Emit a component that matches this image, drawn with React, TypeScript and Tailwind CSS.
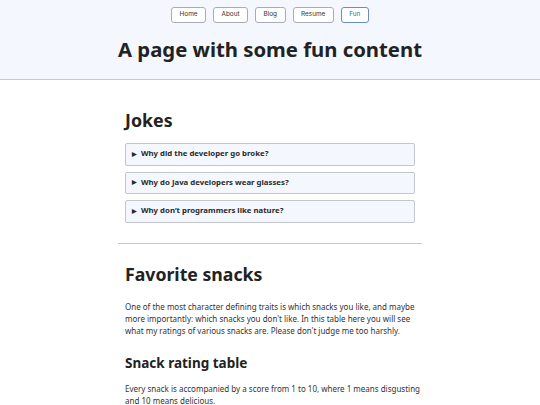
import React from "react";

const jokes = [
  "Why did the developer go broke?",
  "Why do Java developers wear glasses?",
  "Why don\u2019t programmers like nature?",
];

const nav = ["Home", "About", "Blog", "Resume", "Fun"];

export default function App() {
  return (
    <div className="min-h-[405px] bg-white text-[#2a2a2a]" style={{ fontFamily: '"Noto Sans", sans-serif' }}>
      <header className="bg-[#f4f7fe] border-b border-[#c8cad0] pt-[7px] pb-[16px]">
        <nav className="flex justify-center gap-[7px]">
          {nav.map((n) => (
            <span
              key={n}
              className={
                "h-[16px] px-[7.5px] flex items-center rounded-[3px] border bg-white text-[6.4px] " +
                (n === "Fun" ? "border-[#6a8ccc] text-[#3f63a8]" : "border-[#a9acb3] text-[#333]")
              }
              style={{ fontFamily: "Inter, sans-serif" }}
            >
              {n}
            </span>
          ))}
        </nav>
        <h1 className="text-center text-[20.3px] font-bold leading-[28px] mt-[12px] text-[#222]">
          A page with some fun content
        </h1>
      </header>
      <main className="w-[304px] mx-auto">
        <section className="px-[7px] pt-[27px]">
          <h2 className="text-[17.8px] font-bold leading-[26px] text-[#222]">Jokes</h2>
          <div className="mt-[10px] flex flex-col gap-[6px]">
            {jokes.map((j) => (
              <div
                key={j}
                className="h-[22.5px] flex items-center rounded-[2px] border border-[#c3c6cc] bg-[#f4f7fe] pl-[6px] text-[7.8px] font-bold text-[#2a2a2a]"
              >
                <span className="text-[6px] mr-[4px]">▶</span>
                {j}
              </div>
            ))}
          </div>
        </section>
        <hr className="mt-[20px] border-t border-[#c8c8c8]" />
        <section className="pl-[7px] pr-[1px] pt-[17px]">
          <h2 className="text-[17.7px] font-bold leading-[26px] text-[#222]">Favorite snacks</h2>
          <p className="mt-[14px] text-[8px] leading-[12px] text-[#333]">
            One of the most character defining traits is which snacks you like, and maybe more importantly: which snacks you don't like. In this table here you will see what my ratings of various snacks are. Please don't judge me too harshly.
          </p>
          <h3 className="mt-[16px] text-[13.5px] font-bold leading-[20px] text-[#222]">Snack rating table</h3>
          <p className="mt-[10px] text-[8px] leading-[12px] text-[#333]">
            Every snack is accompanied by a score from 1 to 10, where 1 means disgusting and 10 means delicious.
          </p>
        </section>
      </main>
    </div>
  );
}
